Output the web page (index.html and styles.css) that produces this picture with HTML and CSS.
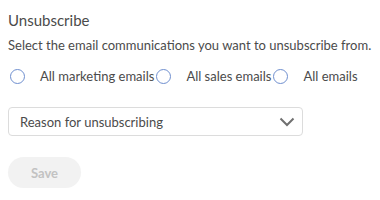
FILE: index.html
```html
<!DOCTYPE html>
<html lang="en">
<head>
    <meta charset="UTF-8">
    <title>Unsubscribe</title>
    <link rel="stylesheet" href="styles.css">
</head>
<body>

<div class="unsub">
    <h3 class="title">Unsubscribe</h3>
    <p class="desc">Select the email communications you want to unsubscribe from.</p>

    <div class="options">
        <label class="option"><span class="radio"></span>All marketing emails</label>
        <label class="option"><span class="radio"></span>All sales emails</label>
        <label class="option"><span class="radio"></span>All emails</label>
    </div>

    <div class="select">
        <span>Reason for unsubscribing</span>
        <svg width="16" height="10" viewBox="0 0 16 10">
            <path d="M1.5 1.5 L8 8 L14.5 1.5" fill="none" stroke="#707070" stroke-width="2"/>
        </svg>
    </div>

    <button class="save" disabled>Save</button>
</div>

</body>
</html>
```

FILE: styles.css
```css
* {
    margin: 0;
    padding: 0;
    box-sizing: border-box;
}
body {
    margin: 0;
    background: white;
    font-family: Lato, "Open Sans", Arial, sans-serif;
    color: #4b4b4b;
}
.unsub {
    padding: 8px 8px;
    white-space: nowrap;
}
.title {
    font-size: 15px;
    font-weight: normal;
    line-height: 22px;
    margin-top: 1px;
}
.desc {
    font-size: 13px;
    line-height: 18px;
    margin-top: 5px;
}
.options {
    display: flex;
    margin-top: 13px;
    font-size: 13px;
    line-height: 18px;
}
.option {
    display: flex;
    align-items: center;
}
.radio {
    width: 15px;
    height: 15px;
    border: 1.5px solid #6f8fcf;
    border-radius: 50%;
    margin: 0 15px 0 2px;
}
.select {
    display: flex;
    align-items: center;
    justify-content: space-between;
    width: 295px;
    height: 29px;
    margin-top: 22px;
    padding: 0 7px 0 11px;
    border: 1px solid #dcdcdc;
    border-radius: 4px;
    font-size: 13px;
}
.save {
    display: block;
    margin-top: 21px;
    width: 73px;
    height: 31px;
    border: none;
    border-radius: 16px;
    background: #f2f2f2;
    color: #c2c2c2;
    font-family: inherit;
    font-size: 13px;
    font-weight: bold;
}
```
